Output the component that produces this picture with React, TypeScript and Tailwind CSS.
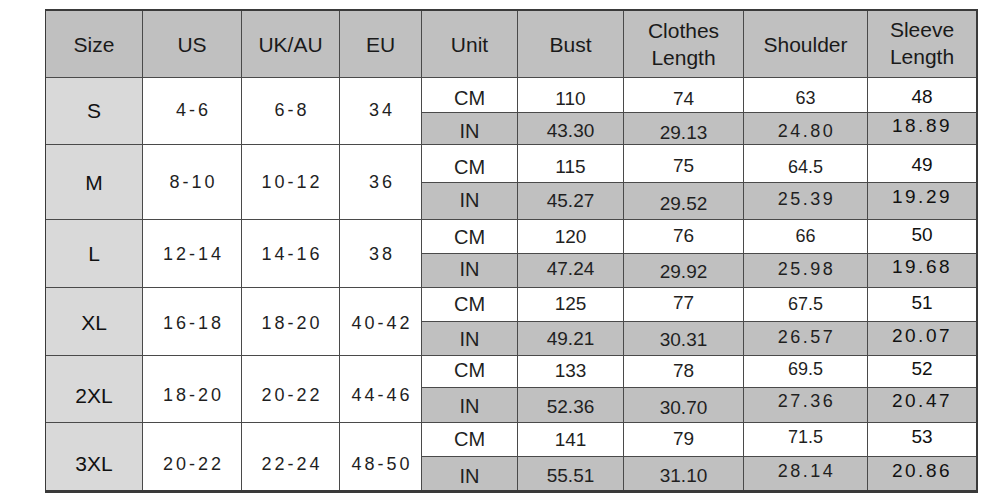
import React from 'react';

type Size = {
  label: string;
  us: string;
  uk: string;
  eu: string;
  cm: string[];
  inch: string[];
  rows: [string, string];
  // small vertical nudges per cell: [unit, bust, clothes, shoulder, sleeve]
  cmOff: string[];
  inOff: string[];
  blockOff: string;
};

const sizes: Size[] = [
  {
    label: 'S', us: '4-6', uk: '6-8', eu: '34',
    cm: ['110', '74', '63', '48'], inch: ['43.30', '29.13', '24.80', '18.89'],
    rows: ['h-[35px]', 'h-[32px]'],
    blockOff: '-translate-y-[1px]',
    cmOff: ['translate-y-[3px]', 'translate-y-[3px]', 'translate-y-[3px]', 'translate-y-[3px]', 'translate-y-[1px]'],
    inOff: ['translate-y-[2px]', 'translate-y-[2px]', 'translate-y-[4px]', 'translate-y-[2px]', '-translate-y-[3px]'],
  },
  {
    label: 'M', us: '8-10', uk: '10-12', eu: '36',
    cm: ['115', '75', '64.5', '49'], inch: ['45.27', '29.52', '25.39', '19.29'],
    rows: ['h-[38px]', 'h-[37px]'],
    blockOff: 'translate-y-0',
    cmOff: ['translate-y-[3px]', 'translate-y-[3px]', 'translate-y-[2px]', 'translate-y-[3px]', 'translate-y-[1px]'],
    inOff: ['-translate-y-[1px]', '-translate-y-[1px]', 'translate-y-[2px]', '-translate-y-[2px]', '-translate-y-[5px]'],
  },
  {
    label: 'L', us: '12-14', uk: '14-16', eu: '38',
    cm: ['120', '76', '66', '50'], inch: ['47.24', '29.92', '25.98', '19.68'],
    rows: ['h-[34px]', 'h-[34px]'],
    blockOff: 'translate-y-0',
    cmOff: ['translate-y-0', 'translate-y-0', '-translate-y-[1px]', '-translate-y-[1px]', '-translate-y-[2px]'],
    inOff: ['-translate-y-[2px]', '-translate-y-[2px]', 'translate-y-[1px]', '-translate-y-[2px]', '-translate-y-[4px]'],
  },
  {
    label: 'XL', us: '16-18', uk: '18-20', eu: '40-42',
    cm: ['125', '77', '67.5', '51'], inch: ['49.21', '30.31', '26.57', '20.07'],
    rows: ['h-[34px]', 'h-[34px]'],
    blockOff: 'translate-y-[1px]',
    cmOff: ['-translate-y-[1px]', '-translate-y-[1px]', '-translate-y-[2px]', '-translate-y-[1px]', '-translate-y-[2px]'],
    inOff: ['translate-y-0', 'translate-y-0', 'translate-y-[1px]', '-translate-y-[2px]', '-translate-y-[3px]'],
  },
  {
    label: '2XL', us: '18-20', uk: '20-22', eu: '44-46',
    cm: ['133', '78', '69.5', '52'], inch: ['52.36', '30.70', '27.36', '20.47'],
    rows: ['h-[32px]', 'h-[35px]'],
    blockOff: 'translate-y-[6px]',
    cmOff: ['-translate-y-[2px]', '-translate-y-[1px]', '-translate-y-[1px]', '-translate-y-[3px]', '-translate-y-[3px]'],
    inOff: ['translate-y-[1px]', 'translate-y-[1px]', 'translate-y-[2px]', '-translate-y-[4px]', '-translate-y-[5px]'],
  },
  {
    label: '3XL', us: '20-22', uk: '22-24', eu: '48-50',
    cm: ['141', '79', '71.5', '53'], inch: ['55.51', '31.10', '28.14', '20.86'],
    rows: ['h-[34px]', 'h-[33px]'],
    blockOff: 'translate-y-[7px]',
    cmOff: ['-translate-y-[1px]', 'translate-y-0', '-translate-y-[1px]', '-translate-y-[3px]', '-translate-y-[3px]'],
    inOff: ['translate-y-[2px]', 'translate-y-[2px]', 'translate-y-[2px]', '-translate-y-[3px]', '-translate-y-[3px]'],
  },
];

const cols = 'grid grid-cols-[97px_99px_98px_82px_96px_106px_120px_124px_108px]';

function Cell({ className = '', children }: { className?: string; children?: React.ReactNode }) {
  return (
    <div className={`flex items-center justify-center text-center border-[#4a4a4a] ${className}`}>
      {children}
    </div>
  );
}

function SizeBlock({ s, last }: { s: Size; last: boolean }) {
  const bb = last ? '' : 'border-b';
  const spaced = 'text-[18px] tracking-[3px] pl-[3px] text-[#1f1f1f]';
  const cm = `${s.rows[0]} border-b bg-white text-[#1f1f1f]`;
  const inch = `${s.rows[1]} ${bb} bg-[#c0c0c0] text-[#1f1f1f]`;
  return (
    <div className={cols}>
      <Cell className={`row-span-2 border-r ${bb} bg-[#d9d9d9] text-[21px] text-[#111]`}>
        <span className={s.blockOff}>{s.label}</span>
      </Cell>
      <Cell className={`row-span-2 border-r ${bb} bg-white ${spaced}`}>
        <span className={s.blockOff}>{s.us}</span>
      </Cell>
      <Cell className={`row-span-2 border-r ${bb} bg-white ${spaced}`}>
        <span className={s.blockOff}>{s.uk}</span>
      </Cell>
      <Cell className={`row-span-2 border-r ${bb} bg-white ${spaced}`}>
        <span className={s.blockOff}>{s.eu}</span>
      </Cell>

      <Cell className={`${cm} border-r text-[20px]`}><span className={s.cmOff[0]}>CM</span></Cell>
      <Cell className={`${cm} border-r text-[19px]`}><span className={s.cmOff[1]}>{s.cm[0]}</span></Cell>
      <Cell className={`${cm} border-r text-[19px]`}><span className={s.cmOff[2]}>{s.cm[1]}</span></Cell>
      <Cell className={`${cm} border-r text-[18px]`}><span className={s.cmOff[3]}>{s.cm[2]}</span></Cell>
      <Cell className={`${cm} text-[19px] text-[#111]`}><span className={s.cmOff[4]}>{s.cm[3]}</span></Cell>

      <Cell className={`${inch} border-r text-[20px]`}><span className={s.inOff[0]}>IN</span></Cell>
      <Cell className={`${inch} border-r text-[19px]`}><span className={s.inOff[1]}>{s.inch[0]}</span></Cell>
      <Cell className={`${inch} border-r text-[19px]`}><span className={s.inOff[2]}>{s.inch[1]}</span></Cell>
      <Cell className={`${inch} border-r text-[18px] tracking-[2.5px] pl-[2px]`}>
        <span className={s.inOff[3]}>{s.inch[2]}</span>
      </Cell>
      <Cell className={`${inch} text-[19px] tracking-[2.5px] text-[#111]`}>
        <span className={s.inOff[4]}>{s.inch[3]}</span>
      </Cell>
    </div>
  );
}

export default function App() {
  return (
    <div className="w-[996px] h-[497px] bg-white font-['Liberation_Sans',Arial,sans-serif] leading-none">
      <div className="pt-[9px] pl-[45px]">
        <div className="w-[933px] border-l border-t-2 border-r-2 border-b-[3px] border-[#3a3a3a]">
          {/* header */}
          <div className={`${cols} h-[67px] bg-[#c0c0c0] text-[21px] text-[#1a1a1a] leading-[27px]`}>
            <Cell className="border-r border-b">Size</Cell>
            <Cell className="border-r border-b">US</Cell>
            <Cell className="border-r border-b">UK/AU</Cell>
            <Cell className="border-r border-b">EU</Cell>
            <Cell className="border-r border-b">Unit</Cell>
            <Cell className="border-r border-b">Bust</Cell>
            <Cell className="border-r border-b flex-col">
              <span>Clothes</span>
              <span>Length</span>
            </Cell>
            <Cell className="border-r border-b">Shoulder</Cell>
            <Cell className="border-b flex-col pb-[2px]">
              <span>Sleeve</span>
              <span>Length</span>
            </Cell>
          </div>
          {sizes.map((s, i) => (
            <SizeBlock key={s.label} s={s} last={i === sizes.length - 1} />
          ))}
        </div>
      </div>
    </div>
  );
}
